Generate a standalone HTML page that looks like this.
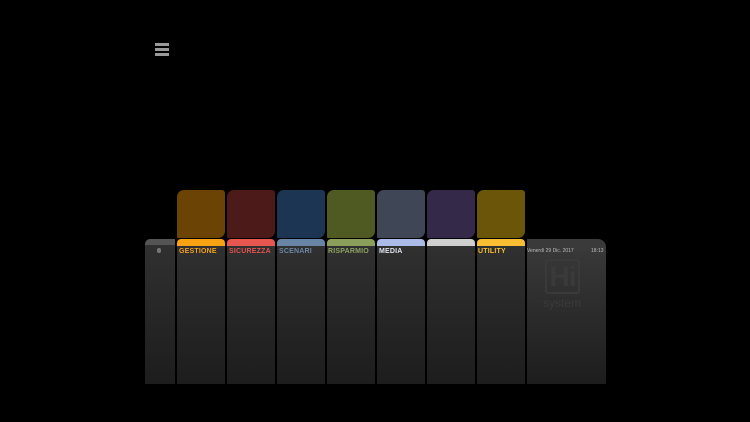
<!DOCTYPE html><html><head><style>
body{margin:0;width:750px;height:422px;background:#000;position:relative;overflow:hidden;font-family:"Liberation Sans",sans-serif}
.a{position:absolute}
.t{position:absolute;top:190px;width:48px;height:48px;border-radius:7px 3px 7px 1px}
.h{position:absolute;top:239px;height:7px;border-radius:4px 4px 0 0}
.b{position:absolute;top:246px;height:138px;background:linear-gradient(#303030,#1d1d1d)}
.l{position:absolute;top:248px;font-size:7px;font-weight:bold;letter-spacing:.2px}
</style></head><body>
<div class="a" style="left:155px;top:43px;width:14px;height:3px;background:#999"></div>
<div class="a" style="left:155px;top:48px;width:14px;height:3px;background:#999"></div>
<div class="a" style="left:155px;top:53px;width:14px;height:3px;background:#999"></div>

<div class="t" style="left:177px;background:#6b4305"></div>
<div class="t" style="left:227px;background:#4c1a19"></div>
<div class="t" style="left:277px;background:#1c3552"></div>
<div class="t" style="left:327px;background:#4f5a23"></div>
<div class="t" style="left:377px;background:#3f4656"></div>
<div class="t" style="left:427px;background:#35294a"></div>
<div class="t" style="left:477px;background:#6a5508"></div>

<div class="h" style="left:145px;width:30px;background:#545454;border-radius:5px 0 0 0"></div>
<div class="h" style="left:177px;width:48px;background:#f7a212"></div>
<div class="h" style="left:227px;width:48px;background:#e85650"></div>
<div class="h" style="left:277px;width:48px;background:#6885a6"></div>
<div class="h" style="left:327px;width:48px;background:#8aa05a"></div>
<div class="h" style="left:377px;width:48px;background:#a9bbe6"></div>
<div class="h" style="left:427px;width:48px;background:#cfcfcf"></div>
<div class="h" style="left:477px;width:48px;background:#fbbd32"></div>
<div class="h" style="left:527px;width:79px;background:#3a3a3a;height:12px;border-radius:0 8px 0 0"></div>

<div class="b" style="left:145px;width:30px;top:245px;height:139px"></div>
<div class="b" style="left:177px;width:48px"></div>
<div class="b" style="left:227px;width:48px"></div>
<div class="b" style="left:277px;width:48px"></div>
<div class="b" style="left:327px;width:48px"></div>
<div class="b" style="left:377px;width:48px"></div>
<div class="b" style="left:427px;width:48px"></div>
<div class="b" style="left:477px;width:48px"></div>
<div class="b" style="left:527px;width:79px;top:251px;height:133px;background:linear-gradient(#383838,#1d1d1d)"></div>

<div class="a" style="left:157px;top:248px;width:4px;height:5px;background:#777;border-radius:2px"></div>
<div class="l" style="left:179px;color:#f3a11e">GESTIONE</div>
<div class="l" style="left:229px;color:#e0544f">SICUREZZA</div>
<div class="l" style="left:279px;color:#6c86a6">SCENARI</div>
<div class="l" style="left:328px;color:#8ea35f">RISPARMIO</div>
<div class="l" style="left:379px;color:#dfe4f0">MEDIA</div>
<div class="l" style="left:478px;color:#fbbd32">UTILITY</div>
<div class="a" style="left:527px;top:248px;font-size:5px;color:#bbb">Venerdì 29 Dic. 2017</div>
<div class="a" style="left:591px;top:248px;font-size:5px;color:#bbb">18:13</div>
<div class="a" style="left:545px;top:259px;width:35px;height:35px;border:2px solid #3a3a3a;border-radius:3px;box-sizing:border-box;color:#3a3a3a;font-weight:bold;font-size:28px;text-align:center;line-height:31px;letter-spacing:-1px">Hi</div>
<div class="a" style="left:543px;top:296px;color:#3a3a3a;font-size:12px">system</div>
</body></html>
